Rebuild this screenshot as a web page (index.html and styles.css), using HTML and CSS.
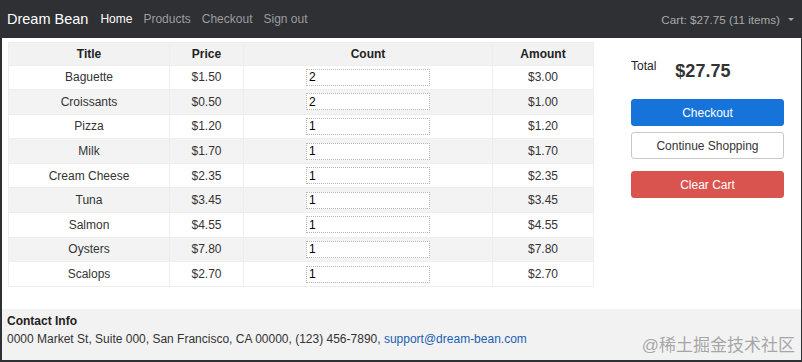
FILE: index.html
```html
<!DOCTYPE html>
<html lang="en">
<head>
  <meta charset="UTF-8">
  <meta name="viewport" content="width=device-width, initial-scale=1.0">
  <title>Dream Bean - Cart</title>
  <link rel="stylesheet" href="styles.css">
</head>
<body>
  <div class="frame">
    <nav class="navbar">
      <a class="brand" href="#">Dream Bean</a>
      <ul class="nav-links">
        <li><a class="active" href="#">Home</a></li>
        <li><a href="#">Products</a></li>
        <li><a href="#">Checkout</a></li>
        <li><a href="#">Sign out</a></li>
      </ul>
      <div class="cart-menu">Cart: $27.75 (11 items) <span class="caret"></span></div>
    </nav>

    <div class="content">
      <table class="cart-table">
        <colgroup>
          <col style="width:161px">
          <col style="width:74px">
          <col style="width:249px">
          <col style="width:101px">
        </colgroup>
        <thead>
          <tr>
            <th>Title</th>
            <th>Price</th>
            <th>Count</th>
            <th>Amount</th>
          </tr>
        </thead>
        <tbody>
          <tr><td>Baguette</td><td>$1.50</td><td><input type="text" value="2"></td><td>$3.00</td></tr>
          <tr><td>Croissants</td><td>$0.50</td><td><input type="text" value="2"></td><td>$1.00</td></tr>
          <tr><td>Pizza</td><td>$1.20</td><td><input type="text" value="1"></td><td>$1.20</td></tr>
          <tr><td>Milk</td><td>$1.70</td><td><input type="text" value="1"></td><td>$1.70</td></tr>
          <tr><td>Cream Cheese</td><td>$2.35</td><td><input type="text" value="1"></td><td>$2.35</td></tr>
          <tr><td>Tuna</td><td>$3.45</td><td><input type="text" value="1"></td><td>$3.45</td></tr>
          <tr><td>Salmon</td><td>$4.55</td><td><input type="text" value="1"></td><td>$4.55</td></tr>
          <tr><td>Oysters</td><td>$7.80</td><td><input type="text" value="1"></td><td>$7.80</td></tr>
          <tr><td>Scalops</td><td>$2.70</td><td><input type="text" value="1"></td><td>$2.70</td></tr>
        </tbody>
      </table>

      <div class="summary">
        <div class="total">
          <span class="total-label">Total</span>
          <span class="total-value">$27.75</span>
        </div>
        <button class="btn btn-primary">Checkout</button>
        <button class="btn btn-default">Continue Shopping</button>
        <button class="btn btn-danger">Clear Cart</button>
      </div>
    </div>

    <footer class="footer">
      <div class="footer-title">Contact Info</div>
      <div>0000 Market St, Suite 000, San Francisco, CA 00000, (123) 456-7890, <a href="#">support@dream-bean.com</a></div>
    </footer>

    <div class="watermark">@稀土掘金技术社区</div>
  </div>
</body>
</html>
```

FILE: styles.css
```css
html, body {
  margin: 0;
  padding: 0;
}

body {
  background: #2e3034;
  font-family: "Liberation Sans", Arial, sans-serif;
  font-size: 12px;
  color: #333;
}

.frame {
  position: relative;
  height: 362px;
  box-sizing: border-box;
  padding: 0 1px 2px 2px;
  display: flex;
  flex-direction: column;
}

/* navbar */
.navbar {
  height: 38px;
  margin-left: -2px;
  margin-right: -1px;
  padding: 0 8px 0 7px;
  display: flex;
  align-items: center;
  background: #2e3034;
}

.brand {
  color: #fff;
  font-size: 14.5px;
  text-decoration: none;
  margin-right: 12px;
}

.nav-links {
  list-style: none;
  margin: 0;
  padding: 0;
  display: flex;
  gap: 11px;
}

.nav-links a {
  color: #9b9d9f;
  text-decoration: none;
  font-size: 12px;
}

.nav-links a.active {
  color: #fff;
}

.cart-menu {
  margin-left: auto;
  color: #a8a9ab;
  font-size: 11.7px;
  display: flex;
  align-items: center;
}

.caret {
  display: inline-block;
  margin-left: 8px;
  border-left: 3px solid transparent;
  border-right: 3px solid transparent;
  border-top: 3px solid #a8a9ab;
}

/* cart */
.content {
  flex: 1;
  background: #fff;
  display: flex;
  align-items: flex-start;
  padding: 4px 6px 0 6px;
}

.cart-table {
  width: 585px;
  table-layout: fixed;
  border-collapse: collapse;
}

.cart-table th,
.cart-table td {
  border: 1px solid #eeeeee;
  text-align: center;
  padding: 0 4px;
}

.cart-table th {
  height: 21.5px;
  background: #f2f2f2;
  font-weight: bold;
  color: #222;
}

.cart-table td {
  height: 23.6px;
}

.cart-table tbody tr:nth-child(even) td {
  background: #f3f3f3;
}

.cart-table input {
  width: 124px;
  height: 17px;
  box-sizing: border-box;
  border: 1px dotted #b5b5b5;
  background: #fff;
  padding: 0 2px;
  font-family: "Liberation Sans", Arial, sans-serif;
  font-size: 12px;
  color: #000;
  display: block;
  margin: 0 auto;
}

.summary {
  width: 153px;
  margin-left: 37px;
  padding-top: 16px;
  display: flex;
  flex-direction: column;
}

.total {
  display: flex;
  align-items: flex-start;
  margin-bottom: 17px;
}

.total-label {
  font-size: 12px;
  color: #222;
  margin-top: 1px;
  margin-right: 19px;
}

.total-value {
  font-size: 18px;
  font-weight: bold;
  color: #333;
  margin-top: 3px;
}

.btn {
  height: 27px;
  border-radius: 3px;
  font-family: "Liberation Sans", Arial, sans-serif;
  font-size: 12px;
  cursor: pointer;
  margin-bottom: 6px;
}

.btn-primary {
  background: #1673d9;
  border: 1px solid #1673d9;
  color: #fff;
}

.btn-default {
  background: #fff;
  border: 1px solid #c8c8c8;
  color: #333;
  margin-bottom: 12px;
}

.btn-danger {
  background: #d9534f;
  border: 1px solid #d9534f;
  color: #fff;
}

/* footer */
.footer {
  height: 51px;
  box-sizing: border-box;
  background: #f2f2f2;
  padding: 3px 5px 0 5px;
  color: #333;
  font-size: 12px;
  line-height: 18px;
}

.footer-title {
  font-weight: bold;
  color: #222;
}

.footer a {
  color: #1a5fb4;
  text-decoration: none;
}

.watermark {
  position: absolute;
  right: 7px;
  bottom: 6px;
  font-family: "Liberation Sans", "Noto Sans CJK SC", sans-serif;
  font-size: 17px;
  color: rgba(140, 140, 140, 0.75);
}
```
